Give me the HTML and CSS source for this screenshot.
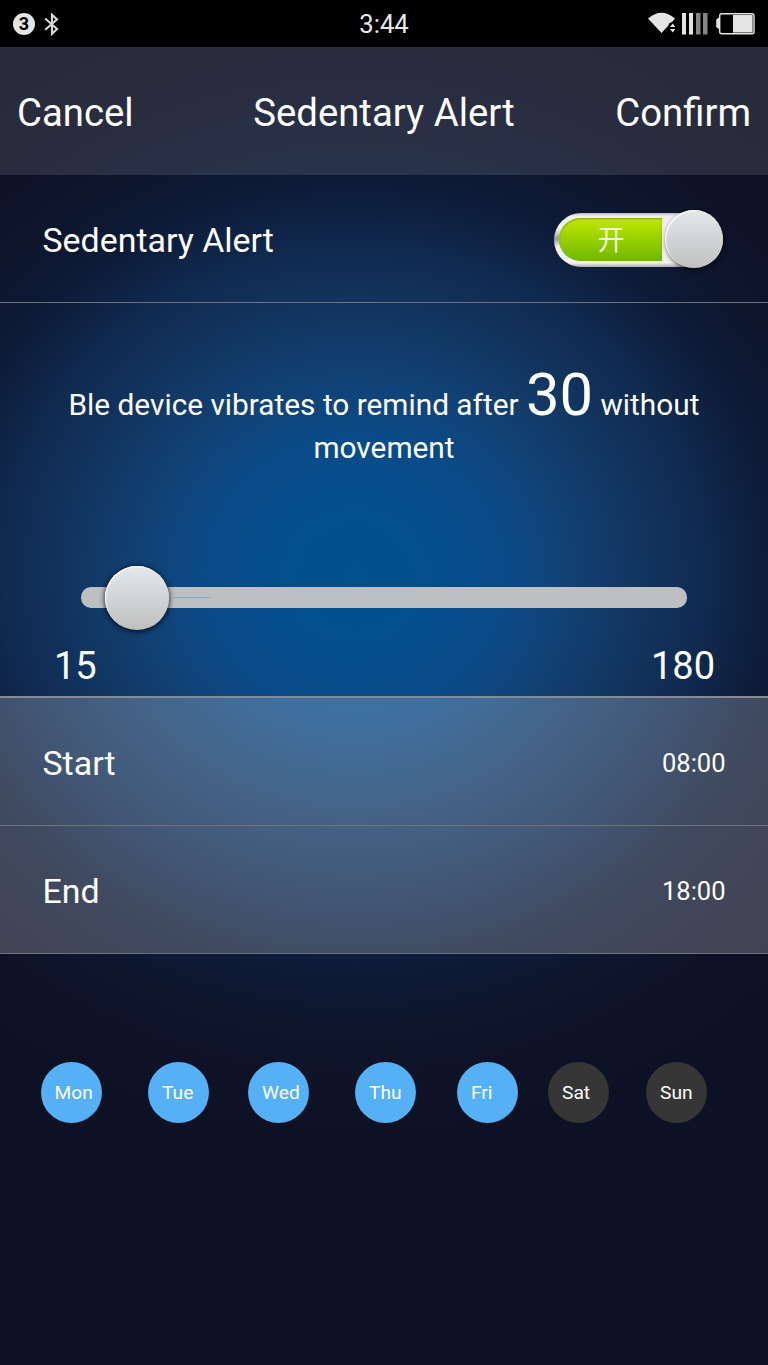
FILE: index.html
```
<!DOCTYPE html>
<html lang="en">
<head>
  <meta charset="UTF-8" />
  <meta name="viewport" content="width=device-width, initial-scale=1.0">
  <title>Sedentary Alert</title>
  <link rel="stylesheet" href="styles.css">
</head>
<body>
  <div class="status-bar">
    <div class="status-left">
      <span class="badge">3</span>
      <svg class="bluetooth" width="15" height="23" viewBox="0 0 15 23">
        <path d="M1.200 5.500 L13 16 L8 20.800 V1.700 L13 6.500 L1.200 16.800" fill="none" stroke="#d8d8d8" stroke-width="2.100" />
      </svg>
    </div>
    <div class="clock">3:44</div>
    <svg class="status-right" width="112" height="24" viewBox="0 0 112 24">
      <!-- wifi -->
      <path d="M0 6.500 Q13.500 -4.800 27 6.500 L24 10 L21.500 11 L20 14 L13.500 21 Z" fill="#e4e4e4" />
      <path d="M22 15 L24.700 11.500 L27.400 15 Z M22 17 H27.400 L24.700 20.500 Z" fill="#e4e4e4" />
      <!-- signal -->
      <rect x="34" y="1" width="4" height="21.500" fill="#e4e4e4" />
      <rect x="41" y="1" width="4" height="21.500" fill="#e4e4e4" />
      <rect x="48" y="1" width="4.500" height="21.500" fill="#858585" />
      <rect x="55" y="1" width="4.500" height="21.500" fill="#858585" />
      <!-- battery -->
      <path d="M71.500 5 L68.200 7.500 V15 L71.500 17.500 Z" fill="#e4e4e4" />
      <rect x="71.700" y="1.700" width="34.300" height="20" rx="2" fill="none" stroke="#e4e4e4" stroke-width="1.400" />
      <rect x="85" y="3" width="19.600" height="17.500" fill="#e4e4e4" />
    </svg>
  </div>

  <div class="screen">
    <div class="header">
      <span class="header-btn">Cancel</span>
      <h1>Sedentary Alert</h1>
      <span class="header-btn right">Confirm</span>
    </div>

    <div class="row alert-row">
      <span class="label">Sedentary Alert</span>
      <div class="toggle">
        <div class="toggle-on">开</div>
        <div class="toggle-knob"></div>
      </div>
    </div>

    <div class="remind">
      <p>Ble device vibrates to remind after <span class="minutes">30</span> without<br>movement</p>
      <div class="slider">
        <div class="slider-line"></div>
        <div class="slider-knob"></div>
      </div>
      <div class="range"><span>15</span><span>180</span></div>
    </div>

    <div class="row time-row">
      <span class="label">Start</span>
      <span class="time">08:00</span>
    </div>
    <div class="row time-row">
      <span class="label">End</span>
      <span class="time">18:00</span>
    </div>

    <div class="days">
      <span class="day mon">Mon</span>
      <span class="day tue">Tue</span>
      <span class="day wed">Wed</span>
      <span class="day thu">Thu</span>
      <span class="day fri">Fri</span>
      <span class="day sat off">Sat</span>
      <span class="day sun off">Sun</span>
    </div>
  </div>
</body>
</html>
```
FILE: styles.css
```
* {
  box-sizing: border-box;
}
body {
  margin: 0;
  height: 1365px;
  overflow: hidden;
  display: flex;
  flex-direction: column;
  font-family: Roboto, "Noto Sans", sans-serif;
  color: #fff;
  background: #000;
}

/* status bar */
.status-bar {
  height: 47px;
  display: grid;
  grid-template-columns: 1fr auto 1fr;
  align-items: center;
  padding: 0 13px;
  background: #000;
}
.status-left {
  display: flex;
  align-items: center;
  gap: 9px;
}
.badge {
  width: 22px;
  height: 22px;
  border-radius: 50%;
  background: #e4e4e4;
  color: #000;
  font: bold 18px/22px Roboto, sans-serif;
  text-align: center;
}
.clock {
  font-size: 25.6px;
  line-height: 47px;
  padding-top: 1px;
  color: #e8e8e8;
}
.status-right {
  justify-self: end;
  margin-right: -5px;
}

/* page */
.screen {
  flex: 1;
  background: radial-gradient(620px 577px at 355px 528px, #03508f 0, #044f8e 70px, #0a4b89 145px, #10447a 195px, #123a67 257px, #11305a 310px, #102a50 350px, #0e2040 395px, #0d1a36 425px, #0e162e 480px, #0e1226 550px, #0c1123 620px);
}
.header {
  height: 128px;
  display: grid;
  grid-template-columns: 1fr auto 1fr;
  align-items: center;
  padding: 2px 17px 0;
  background: rgba(255, 255, 255, 0.115);
  font-size: 38.3px;
}
.header h1 {
  margin: 0;
  font-size: inherit;
  font-weight: normal;
}
.right {
  text-align: right;
}

.row {
  height: 128px;
  display: flex;
  align-items: center;
  justify-content: space-between;
  padding: 2px 42.5px 0;
  font-size: 33.9px;
  border-bottom: 1px solid #6b737f;
}
.label {
  padding-top: 2px;
}

/* on / off switch */
.toggle {
  position: relative;
  width: 169px;
  height: 54px;
  padding: 5px;
  margin-right: 3px;
  border-radius: 27px;
  background:
    linear-gradient(#b9b9c0 0, #f4f2f6 12%, #eeeef1 30%, #999 48%, #eee 62%, #f4f4f6 90%, #aaa 100%) 0 0 / 12px 100% no-repeat,
    linear-gradient(#b9b9c0 0, #f0eef2 6%, #f4f4f5 92%, #aaa 100%);
}
.toggle-on {
  width: 103px;
  height: 43px;
  padding-left: 2px;
  border-radius: 22px 0 0 22px;
  background: linear-gradient(#c0e800, #6fb700);
  box-shadow: inset 0 1px 2px #7fa800;
  font: 400 27px/42px "Noto Sans CJK SC", sans-serif;
  color: #f0fad5;
  text-align: center;
}
.toggle-knob {
  position: absolute;
  right: 0;
  top: -3px;
  width: 58px;
  height: 58px;
  border-radius: 50%;
  background: linear-gradient(#e3e8ea, #c0c0c0);
  box-shadow: inset 1px 1px 1px #fff, 1px 2px 5px rgba(0, 0, 0, 0.7);
}

/* reminder interval */
.remind {
  height: 395px;
  padding-top: 57px;
  border-bottom: 2px solid #848b95;
}
.remind p {
  margin: 0;
  height: 227px;
  text-align: center;
  font-size: 29.8px;
  line-height: 35px;
}
.minutes {
  font-size: 59.7px;
  line-height: 70px;
}
.slider {
  position: relative;
  height: 21px;
  margin: 0 81px;
  border-radius: 10px;
  background: #bebfc1;
}
.slider-line {
  position: absolute;
  left: 93px;
  top: 10px;
  width: 37px;
  height: 1px;
  background: #75abd7;
}
.slider-knob {
  position: absolute;
  left: 24px;
  top: -21px;
  width: 64px;
  height: 64px;
  border-radius: 50%;
  background: linear-gradient(#e5e9eb, #bfbfbf);
  box-shadow: inset 1px 1px 1px #fff, 0 1px 5px 1px rgba(0, 0, 0, 0.7);
}
.range {
  display: flex;
  justify-content: space-between;
  padding: 36px 53px 0 54px;
  font-size: 38px;
  line-height: 45px;
}

.time-row {
  background: rgba(255, 255, 255, 0.21);
}
.time {
  font-size: 25.5px;
}

/* week days */
.days {
  display: flex;
  padding: 108px 0 0 40.5px;
}
.day {
  width: 61px;
  height: 61px;
  padding-left: 14px;
  border-radius: 50%;
  background: #55b0f5;
  font-size: 19.2px;
  line-height: 62px;
}
.tue { margin-left: 46.5px; }
.wed { margin-left: 39px; }
.thu { margin-left: 46px; }
.fri { margin-left: 41px; }
.sat { margin-left: 30px; }
.sun { margin-left: 37px; }
.off {
  background: #363636;
}
```
